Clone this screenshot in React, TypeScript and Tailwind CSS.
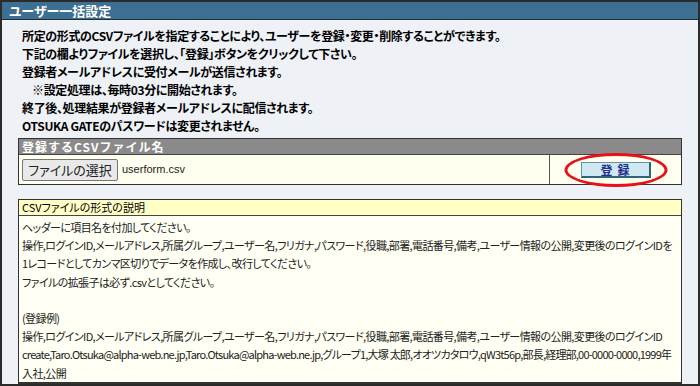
const intro = [
  "所定の形式のCSVファイルを指定することにより、ユーザーを登録・変更・削除することができます。",
  "下記の欄よりファイルを選択し、「登録」ボタンをクリックして下さい。",
  "登録者メールアドレスに受付メールが送信されます。",
  "※設定処理は、毎時03分に開始されます。",
  "終了後、処理結果が登録者メールアドレスに配信されます。",
  "OTSUKA GATEのパスワードは変更されません。",
];

const formatLines = [
  "ヘッダーに項目名を付加してください。",
  "操作,ログインID,メールアドレス,所属グループ,ユーザー名,フリガナ,パスワード,役職,部署,電話番号,備考,ユーザー情報の公開,変更後のログインIDを",
  "1レコードとしてカンマ区切りでデータを作成し、改行してください。",
  "ファイルの拡張子は必ず.csvとしてください。",
  "",
  "(登録例)",
  "操作,ログインID,メールアドレス,所属グループ,ユーザー名,フリガナ,パスワード,役職,部署,電話番号,備考,ユーザー情報の公開,変更後のログインID",
  "create,Taro.Otsuka@alpha-web.ne.jp,Taro.Otsuka@alpha-web.ne.jp,グループ1,大塚 太郎,オオツカタロウ,qW3t56p,部長,経理部,00-0000-0000,1999年",
  "入社,公開",
];

export default function App() {
  return (
    <div className="w-[700px] h-[386px] overflow-hidden border-2 border-[#2b2b2b] bg-[#eef1f5] flex flex-col font-['Noto_Sans_CJK_JP',sans-serif] [font-feature-settings:'palt']">
      <div className="h-[18px] shrink-0 bg-[#3c6f91] border-b border-[#1d2f3b] pl-[7px] text-[13px] font-bold leading-[17px] text-white">
        ユーザー一括設定
      </div>

      <div className="flex-1 flex flex-col px-[16px] pt-[7px] min-h-0">
        <div className="pl-[4px] text-[12px] font-bold leading-[18px] tracking-[-0.35px] text-black">
          {intro.map((line, i) => (
            <div key={i} className={i === 3 ? "pl-[10px] whitespace-nowrap" : "whitespace-nowrap"}>
              {line}
            </div>
          ))}
        </div>

        {/* 登録するCSVファイル名 */}
        <div className="mt-[3px] border border-[#333]">
          <div className="h-[16px] bg-[#8a8a8a] border-b border-[#444] pl-[3px] text-[12px] font-bold leading-[15px] tracking-[1px] [font-feature-settings:normal] text-white">
            登録するCSVファイル名
          </div>
          <div className="grid grid-cols-[1fr_132px] h-[29px] bg-[#fffff0]">
            <div className="flex items-center gap-[4px] pl-[3px]">
              <button className="h-[22px] w-[96px] rounded-[2px] border border-[#767676] bg-[#e9e9e9] text-[13px] leading-[20px] text-[#222]">
                ファイルの選択
              </button>
              <span className="font-['Liberation_Sans',sans-serif] text-[11px] text-[#222]">userform.csv</span>
            </div>
            <div className="relative flex items-center justify-center border-l border-[#555]">
              <button className="h-[16px] w-[70px] border border-[#5b96a6] border-r-2 border-b-2 border-r-[#2f6676] border-b-[#2f6676] bg-[#cfe8f2] text-[12px] font-bold leading-[13px] tracking-[5px] pl-[5px] text-[#1f2f8c]">
                登録
              </button>
              <div className="absolute left-1/2 top-[-2px] h-[34px] w-[103px] -translate-x-1/2 rounded-[50%] border-[3px] border-[#e8101a]" />
            </div>
          </div>
        </div>

        {/* CSVファイルの形式の説明 */}
        <div className="mt-[14px] flex-1 flex flex-col border border-[#333] border-b-2">
          <div className="h-[16px] shrink-0 bg-[#ffffc6] border-b border-[#444] pl-[3px] text-[11px] leading-[15px] text-black">
            CSVファイルの形式の説明
          </div>
          <div className="flex-1 bg-[#fffff3] pl-[3px] pt-[2px] text-[11px] leading-[18.2px] tracking-[-0.6px] text-[#222]">
            {formatLines.map((line, i) => (
              <div key={i} className={i === 7 ? "h-[18.2px] whitespace-nowrap tracking-[-0.78px]" : "h-[18.2px] whitespace-nowrap"}>
                {line}
              </div>
            ))}
          </div>
        </div>
      </div>
    </div>
  );
}
